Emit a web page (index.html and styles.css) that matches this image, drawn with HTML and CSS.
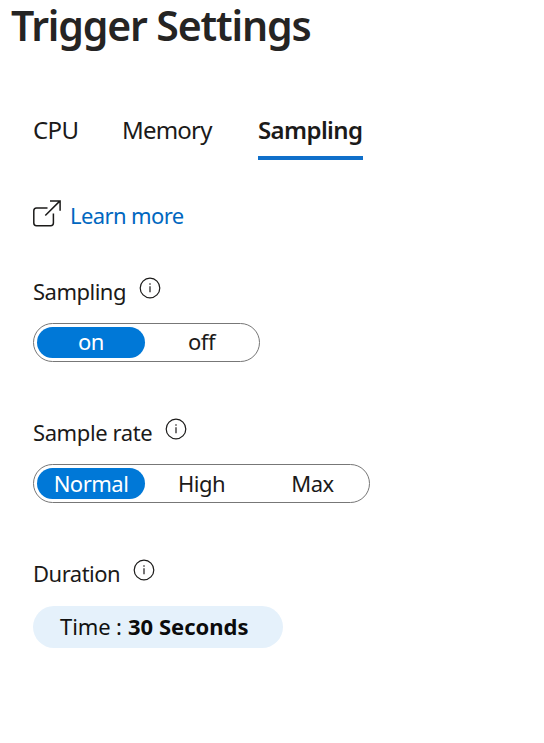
FILE: index.html
```html
<!DOCTYPE html>
<html lang="en">
<head>
<meta charset="utf-8">
<title>Trigger Settings</title>
<link rel="stylesheet" href="styles.css">
</head>
<body>
<h1 class="title">Trigger Settings</h1>
<nav class="tabs">
  <a class="tab tab-cpu">CPU</a>
  <a class="tab tab-memory">Memory</a>
  <a class="tab tab-active">Sampling</a>
</nav>
<main class="panel">
  <div class="learn">
    <svg class="external" width="28" height="28" viewBox="0 0 28 28"><path d="M14.5 8H3.5Q.8 8 .8 10.7V23Q.8 25.7 3.5 25.7H17.7Q20.4 25.7 20.4 23V13.5M12.3 15.5L27 .9M17 .9H27.1V10.7"/></svg>
    <a class="link">Learn more</a>
  </div>
  <section class="field">
    <div class="label"><span class="text-sampling">Sampling</span>
      <svg class="info" width="22" height="22" viewBox="0 0 22 22"><circle cx="11" cy="11" r="9.8"/><path d="M11 9.3V15.3M11 6.2V7.8"/></svg>
    </div>
    <div class="toggle"><span class="option selected">on</span><span class="option">off</span></div>
  </section>
  <section class="field rate">
    <div class="label"><span class="text-rate">Sample rate</span>
      <svg class="info" width="22" height="22" viewBox="0 0 22 22"><circle cx="11" cy="11" r="9.8"/><path d="M11 9.3V15.3M11 6.2V7.8"/></svg>
    </div>
    <div class="toggle"><span class="option selected">Normal</span><span class="option">High</span><span class="option">Max</span></div>
  </section>
  <section class="field">
    <div class="label"><span class="text-duration">Duration</span>
      <svg class="info" width="22" height="22" viewBox="0 0 22 22"><circle cx="11" cy="11" r="9.8"/><path d="M11 9.3V15.3M11 6.2V7.8"/></svg>
    </div>
    <div class="time"><span class="time-name">Time :</span><strong class="time-value">30 Seconds</strong></div>
  </section>
</main>
</body>
</html>
```
FILE: styles.css
```css
* { box-sizing: border-box; }
body {
  margin: 0;
  background: #fff;
  color: #1b1a19;
  font-family: "Noto Sans", "Open Sans", sans-serif;
  font-size: 22px;
  letter-spacing: -0.5px;
}
.title {
  margin: 0 0 57px 11px;
  height: 56px;
  font-size: 41px;
  line-height: 50px;
  font-weight: 600;
  letter-spacing: -1.15px;
  color: #252423;
  white-space: nowrap;
}
.tabs {
  display: flex;
  margin-left: 33px;
  height: 47px;
  font-size: 24px;
  line-height: 34px;
}
.tab-cpu { width: 89px; letter-spacing: -0.6px; }
.tab-memory { width: 136px; letter-spacing: -0.8px; }
.tab-active {
  width: 105px;
  border-bottom: 4px solid #0f6fca;
  font-weight: 600;
  letter-spacing: -0.6px;
}
.panel { margin-left: 33px; padding-top: 39px; }
.learn { display: flex; height: 32px; gap: 9px; margin-bottom: 44px; line-height: 32px; }
.external { fill: none; stroke: #1b1a19; stroke-width: 1.5; margin-top: 1px; }
.link { color: #0067c0; letter-spacing: -0.6px; }
.field { height: 141px; }
.label { display: flex; gap: 13px; height: 32px; line-height: 32px; margin-bottom: 16px; }
.text-sampling { width: 93px; }
.text-rate { width: 119px; letter-spacing: -0.4px; }
.text-duration { width: 87px; }
.label span { white-space: nowrap; }
.info { margin-top: 1.5px; fill: none; stroke: #1b1a19; stroke-width: 1.2; }
.toggle {
  display: inline-flex;
  height: 39px;
  padding: 3px;
  border: 1px solid #777;
  border-radius: 20px;
}
.option { width: 111px; height: 31px; padding-left: 2px; line-height: 29px; text-align: center; }
.rate .option { line-height: 31px; }
.rate .option:last-child { width: 110px; padding-left: 3px; }
.option.selected { width: 108px; padding-left: 0; border-radius: 16px; background: #0078d7; color: #fff; }
.time {
  display: flex;
  width: 250px;
  height: 42px;
  padding-left: 27px;
  margin-top: 17px;
  border-radius: 21px;
  background: #e5f1fb;
  color: #111;
  line-height: 40px;
}
.time-name { width: 68px; letter-spacing: -0.1px; }
.time-value { font-weight: 700; white-space: nowrap; letter-spacing: 0; color: #0b0b0b; }
```
